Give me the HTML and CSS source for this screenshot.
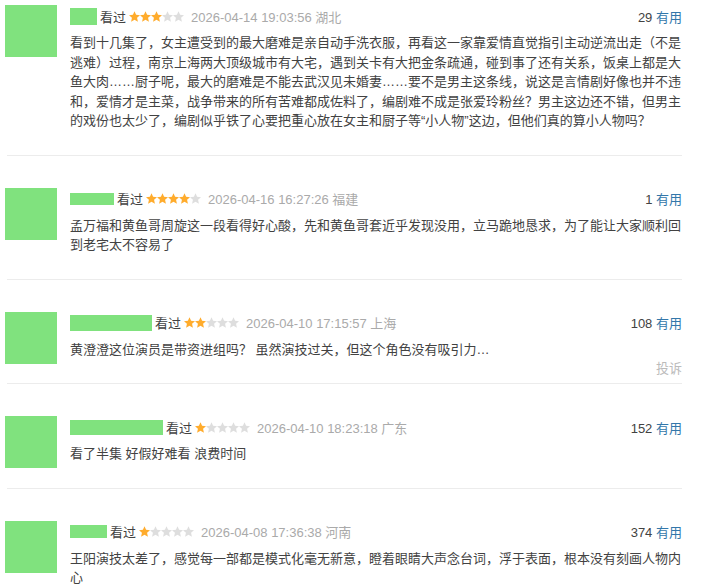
FILE: index.html
```html
<!DOCTYPE html>
<html lang="zh-CN">
  <head>
    <meta charset="UTF-8" />
    <meta name="viewport" content="width=device-width, initial-scale=1.0" />

    <link rel="stylesheet" href="styles.css">

    <title>短评</title>
  </head>
  <body>
    <svg class="defs" width="0" height="0">
      <symbol id="star" viewBox="0 0 11 11">
        <polygon points="5.5,0.2 7.09,3.82 11.02,4.21 8.07,6.83 8.91,10.69 5.5,8.7 2.09,10.69 2.93,6.83 -0.02,4.21 3.91,3.82" />
      </symbol>
    </svg>

    <section id="list"></section>

    <template>
      <article class="comment">
        <div class="avatar"></div>
        <div class="body">
          <header class="meta">
            <span class="name"></span>
            <span class="status">看过</span>
            <span class="stars"></span>
            <span class="time"></span>
            <span class="votes"><span class="count"></span> <a class="useful">有用</a></span>
          </header>
          <p class="text"></p>
          <div class="actions"><a class="report">投诉</a></div>
        </div>
      </article>
    </template>

    <script>
      const list = document.querySelector("#list");
      const temp = document.querySelector("template");

      // names are blanked out, only the size of the block is kept
      const comments = [
        {
          name: [27, 17],
          rating: 3,
          time: "2026-04-14 19:03:56 湖北",
          votes: 29,
          text: "看到十几集了，女主遭受到的最大磨难是亲自动手洗衣服，再看这一家靠爱情直觉指引主动逆流出走（不是逃难）过程，南京上海两大顶级城市有大宅，遇到关卡有大把金条疏通，碰到事了还有关系，饭桌上都是大鱼大肉……厨子呢，最大的磨难是不能去武汉见未婚妻……要不是男主这条线，说这是言情剧好像也并不违和，爱情才是主菜，战争带来的所有苦难都成佐料了，编剧难不成是张爱玲粉丝？男主这边还不错，但男主的戏份也太少了，编剧似乎铁了心要把重心放在女主和厨子等“小人物”这边，但他们真的算小人物吗？",
        },
        {
          name: [44, 12],
          rating: 4,
          time: "2026-04-16 16:27:26 福建",
          votes: 1,
          text: "孟万福和黄鱼哥周旋这一段看得好心酸，先和黄鱼哥套近乎发现没用，立马跪地恳求，为了能让大家顺利回到老宅太不容易了",
        },
        {
          name: [82, 16],
          rating: 2,
          time: "2026-04-10 17:15:57 上海",
          votes: 108,
          text: "黄澄澄这位演员是带资进组吗？ 虽然演技过关，但这个角色没有吸引力…",
          report: true,
        },
        {
          name: [93, 15],
          rating: 1,
          time: "2026-04-10 18:23:18 广东",
          votes: 152,
          text: "看了半集 好假好难看 浪费时间",
        },
        {
          name: [37, 13],
          rating: 1,
          time: "2026-04-08 17:36:38 河南",
          votes: 374,
          text: "王阳演技太差了，感觉每一部都是模式化毫无新意，瞪着眼睛大声念台词，浮于表面，根本没有刻画人物内心",
        },
      ];

      function stars(rating) {
        let svg = '<svg width="55" height="11">';
        for (let i = 0; i < 5; i++) {
          const cls = i < rating ? "on" : "off";
          svg += `<use href="#star" x="${i * 11}" width="11" height="11" class="${cls}" />`;
        }
        return svg + "</svg>";
      }

      function showComments() {
        list.textContent = "";
        comments.forEach((c) => {
          const klon = temp.cloneNode(true).content;
          const name = klon.querySelector(".name");
          name.style.width = c.name[0] + "px";
          name.style.height = c.name[1] + "px";
          klon.querySelector(".stars").innerHTML = stars(c.rating);
          klon.querySelector(".time").textContent = c.time;
          klon.querySelector(".count").textContent = c.votes;
          klon.querySelector(".text").textContent = c.text;
          if (c.report) klon.querySelector(".comment").classList.add("reportable");
          list.appendChild(klon);
        });
      }

      showComments();
    </script>
  </body>
</html>
```

FILE: styles.css
```css
* {
  margin: 0;
  padding: 0;
}

body {
  font-family: "Liberation Sans", "Noto Sans CJK SC", sans-serif;
  color: #424242;
  background-color: #fff;
}

.defs {
  position: absolute;
}

#list {
  padding: 5px 20px 0 7px;
}

.comment {
  display: flex;
  gap: 13px;
  padding: 32px 0 4px;
  border-bottom: 1px solid #ececec;
}
.comment:first-child {
  padding-top: 0;
}

.avatar {
  flex-shrink: 0;
  width: 52px;
  height: 52px;
  margin-left: -2px;
  background-color: #80e27e;
}

.body {
  flex: 1;
  min-width: 0;
}

.meta {
  display: flex;
  align-items: center;
  height: 22px;
  font-size: 13px;
}
.name {
  display: block;
  margin-right: 3px;
  background-color: #80e27e;
}
.status {
  margin-right: 3px;
}
.stars {
  margin-right: 7px;
}
.stars svg {
  display: block;
}
.stars .on {
  fill: #ffac2d;
}
.stars .off {
  fill: #dedede;
}
.time {
  color: #aaa;
  font-size: 13px;
}
.votes {
  margin-left: auto;
}
.useful {
  color: #37a;
}

.text {
  margin-top: 6px;
  font-size: 13px;
  line-height: 19.5px;
}

.actions {
  height: 20px;
  line-height: 20px;
  font-size: 13px;
  text-align: right;
}
.report {
  color: #bbb;
  visibility: hidden;
}
.reportable .report {
  visibility: visible;
}
```
